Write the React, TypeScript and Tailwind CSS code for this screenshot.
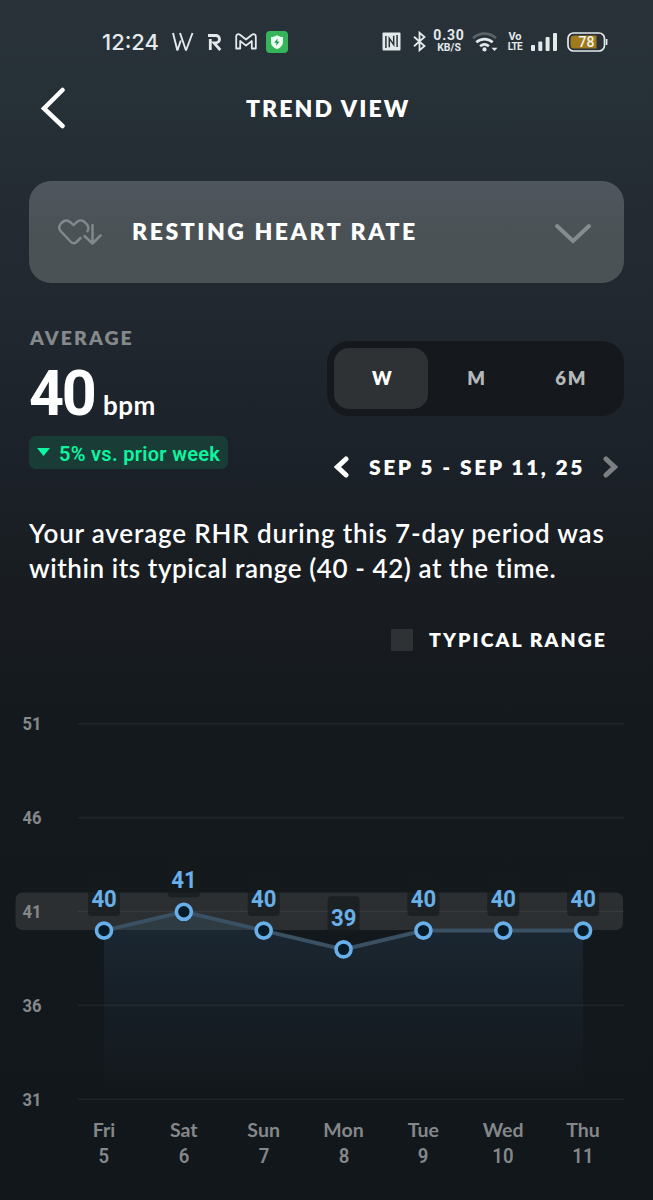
import { ReactNode, useState } from "react";

const GRID_TOP = 724;
const UNIT = 18.78;
const CHART_Y = 700;

const toY = (bpm: number) => GRID_TOP - CHART_Y + (51 - bpm) * UNIT;

const ticks = [51, 46, 41, 36, 31];

const days = [
  { day: "Fri", date: 5, bpm: 40 },
  { day: "Sat", date: 6, bpm: 41 },
  { day: "Sun", date: 7, bpm: 40 },
  { day: "Mon", date: 8, bpm: 39 },
  { day: "Tue", date: 9, bpm: 40 },
  { day: "Wed", date: 10, bpm: 40 },
  { day: "Thu", date: 11, bpm: 40 },
];

const points = days.map((d, i) => ({ x: 104 + i * 79.85, y: toY(d.bpm), bpm: d.bpm }));

function StatusBar() {
  return (
    <div className="flex h-[83px] items-center pl-[102px] pr-[45px] text-[#e4e9ec]">
      <span className="w-[70px] whitespace-nowrap font-['Inter'] text-[22px] font-medium leading-none">12:24</span>
      <svg className="block" width="22" height="22" viewBox="0 0 22 22" fill="none" stroke="currentColor" strokeWidth="1.9">
        <path d="M1 2 5.4 19.5 8.8 9.5M8 2 14 19.5 20.5 2" strokeLinejoin="bevel" />
      </svg>
      <svg className="ml-[14px] block" width="17" height="18" viewBox="0 0 17 18" fill="none" stroke="currentColor" strokeWidth="2.8">
        <path d="M0 2.5h7.8a3.7 3.7 0 0 1 0 7.4H6l6.3 7.1M2.3 6v11" />
      </svg>
      <svg className="ml-[10px] block" width="22" height="17" viewBox="0 0 22 17" fill="none" stroke="currentColor" strokeWidth="1.8" strokeLinejoin="round">
        <path d="M1.2 3.5V15.5H5.2V8L11 12.6 16.8 8v7.5h4V3.5C20.8 1 18.5.7 17 1.8L11 6.5 5 1.8C3.5.7 1.2 1 1.2 3.5Z" />
      </svg>
      <svg className="ml-[9px] block" width="22" height="22" viewBox="0 0 22 22">
        <rect width="22" height="22" rx="4" fill="#35b45a" />
        <path d="M11 4.2c2 1.3 3.7 1.7 6 1.9v5.2c0 3.1-2.3 5.4-6 7-3.7-1.6-6-3.9-6-7V6.1c2.3-.2 4-.6 6-1.9Z" fill="#e9fff1" />
        <path d="m11.6 7.3-3.3 4.4h2.2l-.5 3.4 3.5-4.6h-2.3z" fill="#23964a" />
      </svg>

      <div className="ml-auto flex items-center">
        <svg className="block" width="19" height="19" viewBox="0 0 19 19">
          <path d="M1.500.5h16q1 0 1 1v16q0 1-1 1h-16q-1 0-1-1v-16q0-1 1-1Z" fill="currentColor" />
          <path d="M3.900 16V4M15.100 3v12M7.300 15.300V6.300L11.700 12.700V3.700" fill="none" stroke="#283238" strokeWidth="1.500" />
        </svg>
        <svg className="ml-[12px] block" width="14" height="21" viewBox="0 0 14 21" fill="none" stroke="currentColor" strokeWidth="1.8">
          <path d="m1 5.8 10.500 9.200-5 4.300V1.700l5 4.300L1 15.200" />
        </svg>
        <div className="ml-[6px] w-[32px] text-center font-['Roboto'] font-bold">
          <div className="-mx-1 -mt-[2px] text-[14px] leading-[14px] tracking-[0.8px]">0.30</div>
          <div className="-mx-1 text-[10.500px] leading-[11px]">KB/S</div>
        </div>
        <svg className="ml-[7px] block" width="27" height="20" viewBox="0 0 27 20" fill="none" strokeWidth="2.7">
          <path d="M1 6.2c6.500-6.100 16.500-6.100 23 0" stroke="#5a6368" />
          <path d="M4.300 10.300c4.800-4.300 11.600-4.300 16.400 0M8.100 14.200c2.700-2.300 6.100-2.300 8.800 0" stroke="currentColor" />
          <circle cx="12.500" cy="17.400" r="2.100" fill="currentColor" />
          <path d="M19.500 15.700h6l-3 3.200z" fill="currentColor" />
        </svg>
        <div className="ml-[9px] w-[14px] text-center font-['Roboto'] font-bold">
          <div className="text-[11px] leading-[11px]">Vo</div>
          <div className="-mx-1 text-[10px] leading-[10px] tracking-[-0.6px]">LTE</div>
        </div>
        <svg className="ml-[9px] block" width="27" height="20" viewBox="0 0 27 20" fill="currentColor">
          <rect x="0" y="13" width="4" height="6" rx="1" />
          <rect x="7.300" y="9.500" width="4" height="9.500" rx="1" />
          <rect x="14.600" y="5" width="4" height="14" rx="1" />
          <rect x="22" y="1" width="4" height="18" rx="1" />
        </svg>
        <svg className="ml-[9px] block" width="41" height="20" viewBox="0 0 41 20">
          <rect x="1" y="1" width="36.500" height="18" rx="5.500" fill="none" stroke="currentColor" strokeWidth="1.700" />
          <path d="M7 3.500H29.500v13H7A3.500 3.500 0 0 1 3.500 13V7A3.500 3.500 0 0 1 7 3.500Z" fill="#a17a1c" />
          <path d="M39.600 7v6" stroke="currentColor" strokeWidth="1.700" />
          <text x="19.500" y="14.900" textAnchor="middle" fill="#f0f1ec" fontFamily="Roboto" fontSize="14" fontWeight="500">78</text>
        </svg>
      </div>
    </div>
  );
}

function Segment({ active, onClick, children }: { active: boolean; onClick: () => void; children: ReactNode }) {
  return (
    <button
      onClick={onClick}
      className={`h-[61px] flex-1 rounded-[15px] pl-[3px] pt-[2px] text-[18.5px] font-extrabold tracking-[1.8px] ${
        active ? "bg-[#2e3235] text-white" : "text-[#b5b8ba]"
      }`}
    >
      {children}
    </button>
  );
}

function TrendChart() {
  const line = points.map(p => `${p.x},${p.y}`).join(" ");
  const floor = toY(31);

  return (
    <svg className="block" width="653" height="410" viewBox="0 0 653 410">
      <defs>
        <linearGradient id="area" x1="0" y1="0" x2="0" y2="1">
          <stop offset="0" stopColor="#4a86b8" stopOpacity="0.15" />
          <stop offset="0.5" stopColor="#3f6f9f" stopOpacity="0.08" />
          <stop offset="0.95" stopColor="#3f6f9f" stopOpacity="0" />
        </linearGradient>
      </defs>

      <rect x="15.5" y="192.5" width="607.5" height="37.5" rx="7" fill="#2b2f31" />
      {ticks.map(t => (
        <g key={t}>
          <path d={`M78 ${toY(t) - 0.3}H624.5`} stroke="#ffffff" strokeOpacity="0.06" strokeWidth="1.6" />
          <text x="22.5" y={toY(t) + 6.4} fill="#85888a" fontFamily="Roboto" fontSize="19" fontWeight="700" textLength="19" lengthAdjust="spacingAndGlyphs">
            {t}
          </text>
        </g>
      ))}

      <polygon points={`${points[0].x},${floor} ${line} ${points[6].x},${floor}`} fill="url(#area)" />
      <polyline points={line} fill="none" stroke="#3a5063" strokeWidth="4" />

      {points.map(p => (
        <g key={p.x}>
          <rect x={p.x - 16} y={p.y - 53} width="32" height="38.5" rx="4" fill="#16191c" fillOpacity="0.7" />
          <circle cx={p.x} cy={p.y} r="7.5" fill="#061b28" stroke="#69b0ea" strokeWidth="3.6" />
          <text x={p.x - 12.6} y={p.y - 23.4} fill="#69b0ea" fontFamily="Roboto" fontSize="24" fontWeight="700" textLength="25.4" lengthAdjust="spacingAndGlyphs">
            {p.bpm}
          </text>
        </g>
      ))}
    </svg>
  );
}

export default function App() {
  const [range, setRange] = useState("W");

  return (
    <main className="h-[1200px] w-[653px] overflow-hidden bg-[linear-gradient(#283238_0px,#263037_110px,#242b33_200px,#20272e_330px,#1b2128_470px,#181c20_600px,#14191d_720px,#12171b_1200px)] font-['Lato',sans-serif] text-white">
      <StatusBar />

      <header className="flex h-[50px] items-center pl-[40px]">
        <svg className="block" width="26" height="42" viewBox="0 0 26 42" fill="none" stroke="currentColor" strokeWidth="4.5" strokeLinecap="round">
          <path d="M22.5 3 4 21.500 22.500 39" />
        </svg>
        <h1 className="ml-[180px] text-[23px] font-extrabold leading-none tracking-[2.1px]">TREND VIEW</h1>
      </header>

      <button className="ml-[29px] mt-[48px] flex h-[101.5px] w-[595px] items-center rounded-[22px] bg-linear-to-b from-[#4f565e] via-[#4b5256] to-[#4b5255] pl-[28px] pr-[32px]">
        <svg className="block" width="46" height="30" viewBox="0 0 46 30" fill="none" stroke="#82888b" strokeWidth="2.5" strokeLinecap="round" strokeLinejoin="round">
          <path d="M30.5 14.2c1.5-2.5 1-5.2-1-7.2l-1.4-1.5C25.6 3 22 2.9 19.5 5.3L16.5 8.2 13.5 5.3C11 2.9 7.5 3 5 5.5L4 6.5C1.7 9 1.7 12 4 14.5L13.5 24.5Q16.5 27.7 19.5 25L23.5 21" />
          <path d="M35.5 8V26M27.5 19l8 7.5L43.500 18.5" />
        </svg>
        <span className="ml-[29px] text-[23px] font-extrabold leading-none tracking-[2.55px]">RESTING HEART RATE</span>
        <svg className="ml-auto mt-[4px] block" width="38" height="22" viewBox="0 0 38 22" fill="none" stroke="#858c8f" strokeWidth="4" strokeLinecap="round">
          <path d="m3 3 16 15L35 3" />
        </svg>
      </button>

      <section className="flex h-[218.5px] justify-between pl-[29px] pr-[29px]">
        <div className="pt-[45.5px]">
          <h2 className="ml-px text-[19.5px] font-extrabold leading-[20px] tracking-[2.1px] text-[#85898c]">AVERAGE</h2>
          <div className="mt-[15px] flex items-baseline">
            <span className="w-[66px] origin-left scale-x-[0.97] font-['Roboto'] text-[63px] font-bold leading-[62px] tracking-[-2.5px]">40</span>
            <span className="ml-[8px] text-[26px] font-bold leading-none tracking-[0.5px]">bpm</span>
          </div>
          <div className="mt-[11px] flex h-[33px] w-[199px] items-center rounded-[7px] bg-[#1a3c37] pl-[8px]">
            <svg className="block" width="13" height="9" viewBox="0 0 13 9" fill="#0cf5a0">
              <path d="M0 0h13L6.5 8z" />
            </svg>
            <span className="ml-[9px] mt-[2px] whitespace-nowrap font-['Roboto'] text-[20px] font-semibold tracking-[0.3px] text-[#0cf5a0]">5% vs. prior week</span>
          </div>
        </div>

        <div className="w-[297px] pt-[58px]">
          <div className="flex h-[75px] items-center rounded-[22px] bg-[#15191d] px-[7px]">
            {["W", "M", "6M"].map(r => (
              <Segment key={r} active={range === r} onClick={() => setRange(r)}>
                {r}
              </Segment>
            ))}
          </div>
          <div className="mt-[39px] flex items-center pl-[7px] pr-[6px]">
            <svg className="block" width="15" height="24" viewBox="0 0 15 24" fill="none" stroke="#ffffff" strokeWidth="5" strokeLinecap="round">
              <path d="m12 4-8.5 8 8.5 8" />
            </svg>
            <span className="ml-[20px] whitespace-nowrap text-[21px] font-extrabold leading-none tracking-[2.5px]">SEP 5 - SEP 11, 25</span>
            <svg className="ml-auto block" width="15" height="24" viewBox="0 0 15 24" fill="none" stroke="#7c8083" strokeWidth="5" strokeLinecap="round">
              <path d="m3 4 8.5 8L3 20" />
            </svg>
          </div>
        </div>
      </section>

      <p className="ml-[29px] mt-[15px] h-[70px] whitespace-nowrap text-[26px] font-semibold leading-[35px]">
        <span className="tracking-[0.82px]">Your average RHR during this 7-day period was</span>
        <br />
        <span className="tracking-[0.58px]">within its typical range (40 - 42) at the time.</span>
      </p>

      <div className="mt-[43px] flex h-[22px] items-center justify-end pr-[46px]">
        <span className="h-[22px] w-[22px] bg-[#2e3235]" />
        <span className="ml-[16px] text-[19.5px] font-extrabold leading-none tracking-[2.05px]">TYPICAL RANGE</span>
      </div>

      <div className="mt-[49px]">
        <TrendChart />
      </div>

      <div className="ml-[64px] grid w-[559px] grid-cols-7 pt-[7px] text-center text-[#85888a]">
        {days.map(d => (
          <div key={d.day} className="leading-[26px]">
            <div className="text-[19.5px] font-bold">{d.day}</div>
            <div className="mt-px scale-x-95 font-['Roboto'] text-[19.5px] font-semibold">{d.date}</div>
          </div>
        ))}
      </div>
    </main>
  );
}
